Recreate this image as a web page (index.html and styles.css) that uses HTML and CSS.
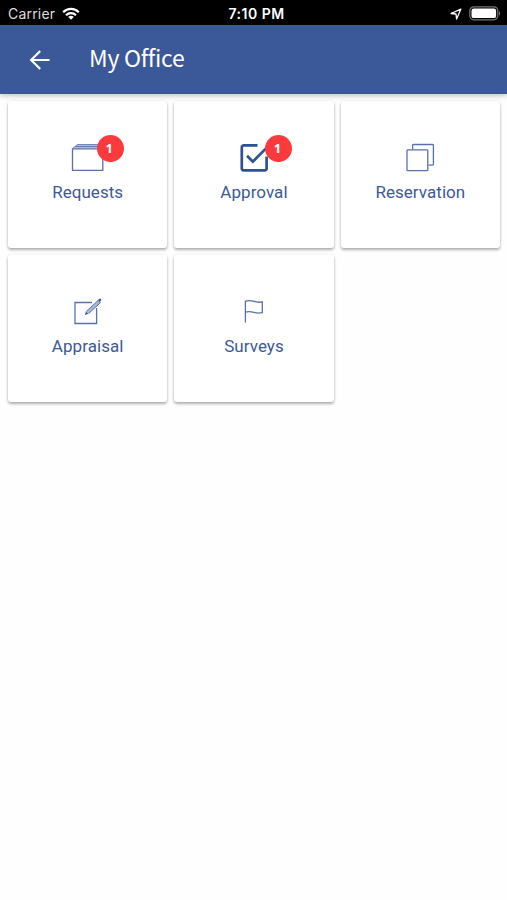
FILE: index.html
```html
<!DOCTYPE html>
<html lang="en">
<head>
    <meta charset="UTF-8">
    <meta name="viewport" content="width=device-width, initial-scale=1.0">
    <title>My Office</title>
    <link rel="stylesheet" href="styles.css">
</head>
<body>
    <div id="status-bar">
        <div class="status-left">
            <span>Carrier</span>
            <svg class="wifi" width="18" height="13" viewBox="0 0 18 13" fill="none" stroke="#fff" stroke-width="2.2">
                <path d="M1.2 5.2a11 11 0 0 1 15.6 0"/>
                <path d="M4 8.2a7 7 0 0 1 10 0"/>
                <path d="M9 12.8L6.2 10a4 4 0 0 1 5.6 0z" fill="#fff" stroke="none"/>
            </svg>
        </div>
        <div class="status-time">7:10 PM</div>
        <div class="status-right">
            <svg width="12" height="12" viewBox="0 0 12 12" fill="none" stroke="#fff" stroke-width="1.3" stroke-linejoin="round">
                <path d="M10.8 1.2L1 5.5l5 .5.6 5z"/>
            </svg>
            <svg width="32" height="16" viewBox="0 0 32 16">
                <rect x="0.8" y="0.8" width="28" height="13" rx="4" fill="none" stroke="#777" stroke-width="1.2"/>
                <rect x="2.5" y="2.5" width="24.6" height="9.6" rx="2.2" fill="#fff"/>
                <path d="M30 5.1c1.6.8 1.6 3.8 0 4.6z" fill="#777"/>
            </svg>
        </div>
    </div>
    <header id="toolbar">
        <svg class="back" width="22" height="20" viewBox="0 0 22 20" fill="none" stroke="#fff" stroke-width="2.2">
            <path d="M20.5 10H2.5M11.2 1L2.2 10l9 9"/>
        </svg>
        <h1>My Office</h1>
    </header>
    <main id="menu">
        <a class="card">
            <div class="icon">
                <svg width="40" height="32" viewBox="0 0 40 32">
                    <path d="M4.500 7.500L9.500 3.500H32L35 7.500z" fill="#a9b9da" stroke="none"/>
                    <path d="M4.500 7.500L9.500 3.500H33M7.500 5.500H34" stroke-width="0.8"/>
                    <path d="M4.500 7.900h30.300v21.500H4.500z"/>
                </svg>
                <span class="badge">1</span>
            </div>
            <span class="label">Requests</span>
        </a>
        <a class="card">
            <div class="icon">
                <svg width="40" height="32" viewBox="0 0 40 32">
                    <path class="bold" d="M23.500 4.400H9.800a2 2 0 0 0-2 2v20.900a2 2 0 0 0 2 2h20.800a2 2 0 0 0 2-2V15.500"/>
                    <path class="bold" d="M13 14.800l5.800 5.900L33 6.400"/>
                </svg>
                <span class="badge badge-right">1</span>
            </div>
            <span class="label">Approval</span>
        </a>
        <a class="card">
            <div class="icon">
                <svg width="40" height="32" viewBox="0 0 40 32">
                    <rect x="7" y="8.900" width="20.800" height="20.800" rx="0.8"/>
                    <path d="M12.600 8.400V4.300a.8.8 0 0 1 .8-.8H32.600a.8.8 0 0 1 .8.8V23.300a.8.8 0 0 1-.8.8H28.400"/>
                </svg>
            </div>
            <span class="label">Reservation</span>
        </a>
        <a class="card">
            <div class="icon">
                <svg width="40" height="32" viewBox="0 0 40 32">
                    <path d="M24 7.500H7v21h21.600V13"/>
                    <path class="pencil" d="M18.300 16.400L30 5.500l2.300 2.300L20.600 18.500"/>
                    <path class="solid" d="M30 5.100l1.500-1.400q.8-.5 1.500.2t.1 1.500L31.800 7zM16.800 19.900l1.200-3.300 2.500 2.200z"/>
                </svg>
            </div>
            <span class="label">Appraisal</span>
        </a>
        <a class="card">
            <div class="icon">
                <svg width="40" height="32" viewBox="0 0 40 32">
                    <path d="M11.400 27.500V6.200c3.800-1 6.300-.6 8.600.2s5.200 1.200 8.300.5v10.700c-3.200.8-5.800.5-8.300-.2s-5-1.200-8.600-.3"/>
                </svg>
            </div>
            <span class="label">Surveys</span>
        </a>
    </main>
</body>
</html>
```

FILE: styles.css
```css
body {
    font-family: Roboto, 'Liberation Sans', sans-serif;
    background-color: #fefefe;
    margin: 0;
}
#status-bar {
    display: grid;
    grid-template-columns: 1fr auto 1fr;
    align-items: center;
    box-sizing: border-box;
    height: 25px;
    padding: 2px 6px 0 8px;
    background-color: #000;
    color: #fff;
    font-family: Inter, 'Liberation Sans', sans-serif;
    font-size: 14px;
    line-height: 22px;
}
.status-left, .status-right {
    display: flex;
    align-items: center;
}
.status-left {
    gap: 7px;
    color: #ddd;
    letter-spacing: 0.2px;
}
.status-time {
    padding-left: 4px;
    font-weight: 600;
    font-size: 14px;
    letter-spacing: 0.5px;
}
.status-right {
    justify-content: flex-end;
    gap: 7px;
}
#toolbar {
    display: flex;
    align-items: center;
    height: 69px;
    padding-left: 29px;
    background-color: #3b5998;
    color: #fff;
    box-shadow: 0 1px 6px rgba(0,0,0,0.3);
}
#toolbar h1 {
    margin: 0 0 6px 38px;
    font-family: 'Noto Sans CJK SC', 'Noto Sans', sans-serif;
    font-size: 23px;
    font-weight: 400;
    line-height: 32px;
    letter-spacing: -0.3px;
}
#menu {
    display: grid;
    grid-template-columns: repeat(3, 1fr);
    grid-auto-rows: 147px;
    gap: 7px;
    padding: 7px 7px 7px 8px;
}
.card {
    display: flex;
    flex-direction: column;
    align-items: center;
    box-sizing: border-box;
    padding-top: 40px;
    background-color: #fff;
    border-radius: 3px;
    box-shadow: 0 2px 3px rgba(0,0,0,0.3), 0 0 3px rgba(0,0,0,0.08);
    color: #3b5998;
}
.icon {
    position: relative;
    width: 40px;
    height: 32px;
}
.icon svg {
    display: block;
    fill: none;
    stroke: #5871ab;
    stroke-width: 1.3;
}
.icon .bold {
    stroke: #2f5195;
    stroke-width: 2.7;
}
.icon .pencil {
    fill: #a9b9da;
    stroke-width: 1;
}
.icon .solid {
    fill: #3b5998;
    stroke: none;
}
.badge {
    position: absolute;
    top: -6px;
    left: 29px;
    width: 27px;
    height: 27px;
    border-radius: 50%;
    background-color: #fb3a3e;
    color: #fff;
    font-family: 'Open Sans', 'Noto Sans', sans-serif;
    font-size: 13px;
    font-weight: 700;
    line-height: 27px;
    text-indent: -2px;
    text-align: center;
}
.badge-right {
    left: 31px;
}
.label {
    margin-top: 9px;
    font-size: 17px;
    line-height: 20px;
    letter-spacing: 0.05px;
}
```
